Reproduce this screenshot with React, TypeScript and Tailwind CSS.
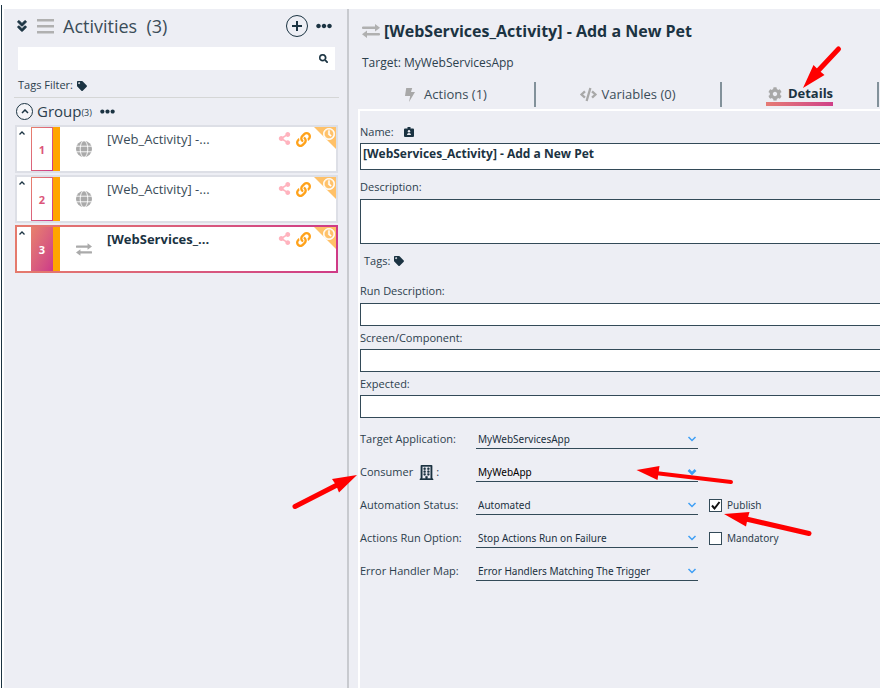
import React from "react";
import {
  FaAngleDoubleDown,
  FaCode,
  FaCog,
  FaEllipsisH,
  FaLink,
  FaRegBuilding,
  FaRegClock,
  FaSearch,
  FaShareAlt,
  FaTag,
} from "react-icons/fa";

function ExchangeIcon({ className }: { className?: string }) {
  return (
    <svg viewBox="0 0 18 14" fill="currentColor" className={className} aria-hidden="true">
      <path d="M1 2.500h12V0l5 3.700-5 3.700V5H1a1.200 1.200 0 0 1 0-2.500z" />
      <path d="M17 9H5V6.600L0 10.300 5 14v-2.500h12A1.200 1.200 0 0 0 17 9z" />
    </svg>
  );
}

function GlobeIcon({ className }: { className?: string }) {
  return (
    <svg viewBox="0 0 16 16" className={className} aria-hidden="true">
      <circle cx="8" cy="8" r="8" fill="currentColor" />
      <g fill="none" stroke="#fff" strokeWidth="0.900">
        <path d="M0 5.200h16M0 10.800h16" />
        <ellipse cx="8" cy="8" rx="3.800" ry="8.300" />
      </g>
    </svg>
  );
}

function BoltIcon({ className }: { className?: string }) {
  return (
    <svg viewBox="0 0 10 14" fill="currentColor" className={className} aria-hidden="true">
      <path d="M1.200 0h6L6 4h4L4 14l1.200-6H0z" />
    </svg>
  );
}

function BadgeIcon() {
  return (
    <svg viewBox="0 0 10 10" className="size-[10px]" aria-hidden="true">
      <path fill="#1b3342" d="M1 1.500h2.500V0h3v1.500H9a1 1 0 0 1 1 1V9a1 1 0 0 1-1 1H1a1 1 0 0 1-1-1V2.500a1 1 0 0 1 1-1z" />
      <circle cx="5" cy="4.200" r="1.200" fill="#edeef4" />
      <path fill="#edeef4" d="M3 8c0-2.700 4-2.700 4 0z" />
    </svg>
  );
}

function Chevron({ bold = false }: { bold?: boolean }) {
  return (
    <svg
      viewBox="0 0 10 6"
      className="pointer-events-none absolute right-px top-[5px] h-[6px] w-[10px]"
      fill="none"
      stroke="#3f9ff5"
      strokeWidth={bold ? 2.6 : 1.5}
      aria-hidden="true"
    >
      <path d="M1.500 1l3.500 3.500L8.500 1" />
    </svg>
  );
}

type Activity = { id: number; name: string; web: boolean; selected?: boolean };

const activities: Activity[] = [
  { id: 1, name: "[Web_Activity] -...", web: true },
  { id: 2, name: "[Web_Activity] -...", web: true },
  { id: 3, name: "[WebServices_...", web: false, selected: true },
];

function ActivityCard({ activity }: { activity: Activity }) {
  const { id, name, web, selected } = activity;
  return (
    <li
      className={
        selected
          ? "h-12 bg-linear-to-r from-[#e57a6c] to-[#cf3a86] p-[2px]"
          : "h-12 bg-[#dddfe6] p-[2px]"
      }
    >
      <div className="relative flex h-full bg-white">
        <div className="w-[14px] shrink-0 pt-[4px] pl-[2px]">
          <svg viewBox="0 0 6 4" className="h-[4px] w-[6px]" fill="none" stroke="#1b3342" strokeWidth="1.300" aria-hidden="true">
            <path d="M0.500 3.500L3 1l2.500 2.500" />
          </svg>
        </div>
        <div className="w-[22px] shrink-0 bg-linear-to-br from-[#e8816b] to-[#cc3889] p-px">
          <div
            className={
              selected
                ? "flex h-full items-center justify-center pt-[2px] text-[11px] font-bold text-white"
                : "flex h-full items-center justify-center bg-white pt-[2px] text-[11px] font-bold text-[#dc5579]"
            }
          >
            {id}
          </div>
        </div>
        <div className="w-[7px] shrink-0 bg-[#ffa500]" />
        <div className="flex w-[47px] shrink-0 items-center justify-center text-[#aaaaaa]">
          {web ? <GlobeIcon className="size-4" /> : <ExchangeIcon className="h-[13px] w-4" />}
        </div>
        <span
          className={
            selected
              ? "min-w-0 flex-1 text-[13px] leading-6 font-bold text-[#1b3342]"
              : "min-w-0 flex-1 text-[13px] leading-6 text-[#3a4c58]"
          }
        >
          {name}
        </span>
        <div className="flex gap-[5px] pt-[5px] pr-[25px]">
          <FaShareAlt className="size-[13px] text-[#ffb3be]" />
          <FaLink className="size-[15px] text-[#ffa21a]" />
        </div>
        <svg viewBox="0 0 22 22" className="absolute top-0 right-0 size-[22px]" aria-hidden="true">
          <path d="M0 0h22v22z" fill="#ffc168" />
        </svg>
        <FaRegClock className="absolute top-px right-px size-[12px] stroke-white stroke-20 text-white" />
      </div>
    </li>
  );
}

function TextRow({ id, label, className }: { id: string; label: string; className: string }) {
  return (
    <div>
      <label htmlFor={id} className={className}>
        {label}
      </label>
      <input id={id} type="text" className="block h-[23px] w-full border border-r-0 border-[#334a58] bg-white px-1 text-[11px] outline-none" />
    </div>
  );
}

type SelectRowProps = {
  id: string;
  label: React.ReactNode;
  value: string;
  bold?: boolean;
  check?: { label: string; checked: boolean };
};

function SelectRow({ id, label, value, bold, check }: SelectRowProps) {
  return (
    <div className="flex h-[33px] items-center">
      <label htmlFor={id} className="flex w-[116px] shrink-0 items-center">
        {label}
      </label>
      <div className="relative w-[222px]">
        <select
          id={id}
          className={
            bold
              ? "block h-[18px] w-full appearance-none border-b border-[#334a58] bg-transparent pl-[2px] font-['Noto_Sans',sans-serif] text-[10px] text-black outline-none"
              : "block h-[18px] w-full appearance-none border-b border-[#334a58] bg-transparent pl-[2px] font-['Noto_Sans',sans-serif] text-[10px] text-[#1b303e] outline-none"
          }
        >
          <option>{value}</option>
        </select>
        <Chevron bold={bold} />
      </div>
      {check && (
        <label className="ml-[11px] flex items-center gap-[5px] font-['Noto_Sans',sans-serif] text-[10px]">
          <span className="relative size-[13px]">
            <input
              type="checkbox"
              defaultChecked={check.checked}
              className="peer block size-[13px] appearance-none border border-[#334a58] bg-white"
            />
            <svg
              viewBox="0 0 13 13"
              className="pointer-events-none absolute inset-0 hidden size-[13px] peer-checked:block"
              fill="none"
              stroke="#111"
              strokeWidth="2"
              aria-hidden="true"
            >
              <path d="M3 6.500l2.500 3L10.500 3" />
            </svg>
          </span>
          {check.label}
        </label>
      )}
    </div>
  );
}

function Annotations() {
  return (
    <svg
      width="883"
      height="689"
      className="pointer-events-none absolute top-0 left-0"
      fill="#ff0000"
      stroke="#ff0000"
      strokeLinecap="round"
      aria-hidden="true"
    >
      <g strokeWidth="5">
        <path d="M838.500 49L816 73" />
        <path d="M295 506.500L339 484" />
        <path d="M731 482L655 473" strokeWidth="4" />
        <path d="M809 533.500L744 518.500" />
      </g>
      <g stroke="none">
        <path d="M803 88l10.500-23 5 5 6 5z" />
        <path d="M357 475l-25 4 4 6 3 7.500z" />
        <path d="M636.500 470l23-4-1 7-1 7z" />
        <path d="M724 514l25.500-2-2 7-1.500 7.500z" />
      </g>
    </svg>
  );
}

export default function App() {
  return (
    <div className="relative flex min-h-screen bg-white pt-[5px] pr-[3px] pb-px pl-px font-['Open_Sans',sans-serif] text-[11px] text-[#2c404d]">
      <div className="flex flex-1 border-l border-[#1b3342] pt-1 pl-[2px]">
        <aside className="w-[345px] shrink-0 border-r-2 border-[#c8cacf] bg-[#edeef4]">
          <header className="flex h-[34px] items-center pl-[11px] pr-[15px]">
            <button aria-label="Collapse all" className="text-[#1b3342]">
              <FaAngleDoubleDown className="size-[14px] stroke-current stroke-30" />
            </button>
            <svg viewBox="0 0 17 15" className="ml-[8px] h-[15px] w-[17px]" fill="#b0b0b0" aria-hidden="true">
              <path d="M0 0h17v2.500H0zM0 6h17v2.500H0zM0 12h17v2.500H0z" />
            </svg>
            <h2 className="ml-[9px] flex-1 text-[18px] text-[#3a4c58]">Activities&nbsp; (3)</h2>
            <button
              aria-label="Add activity"
              className="flex size-[22px] items-center justify-center rounded-full border border-[#1b3342] text-[#1b3342]"
            >
              <svg viewBox="0 0 10 10" className="size-[10px]" fill="currentColor" aria-hidden="true">
                <path d="M4 0h2v4h4v2H6v4H4V6H0V4h4z" />
              </svg>
            </button>
            <button aria-label="More" className="ml-2 text-[#1b3342]">
              <FaEllipsisH className="size-4" />
            </button>
          </header>
          <div className="mt-1 ml-[14px] mr-[12px] flex h-[23px] items-center bg-white pr-[7px]">
            <input aria-label="Search activities" className="min-w-0 flex-1 bg-transparent px-1 outline-none" />
            <button aria-label="Search">
              <FaSearch className="size-[9px] stroke-current stroke-20 text-[#1b3342]" />
            </button>
          </div>
          <div className="mr-2 ml-[10px] flex h-[28px] items-center gap-1 border-b border-[#d5d6d6] pt-1 pl-1">
            Tags Filter: <FaTag className="size-[10px] text-[#1b3342]" />
          </div>
          <div className="flex h-[27px] items-center pl-3">
            <button aria-label="Collapse group" className="flex size-[17px] items-center justify-center rounded-full border border-[#1b3342] bg-[#f5f5f8]">
              <svg viewBox="0 0 8 5" className="h-[5px] w-[8px]" fill="none" stroke="#1b3342" strokeWidth="1.500" aria-hidden="true">
                <path d="M1 4l3-3 3 3" />
              </svg>
            </button>
            <span className="ml-1 text-[15px] text-[#2c404d]">Group</span>
            <span className="pt-[2px] text-[9px]">(3)</span>
            <button aria-label="Group options" className="ml-2 text-[#1b3342]">
              <FaEllipsisH className="size-[15px]" />
            </button>
          </div>
          <ul className="mr-[9px] ml-[11px] flex flex-col gap-[2px]">
            {activities.map((activity) => (
              <ActivityCard key={activity.id} activity={activity} />
            ))}
          </ul>
        </aside>

        <main className="flex min-w-0 flex-1 flex-col bg-[#edeef4] pl-[9px]">
          <h1 className="flex h-[44px] items-center gap-1 pl-1 text-[16px] font-bold text-[#1b3342]">
            <ExchangeIcon className="h-[14px] w-[18px] text-[#b0b0b0]" />
            [WebServices_Activity] - Add a New Pet
          </h1>
          <p className="h-[29px] pl-1 text-[12px] leading-[19px]">Target: MyWebServicesApp</p>
          <nav className="flex h-[27px] text-[13px] text-[#3a4c58]">
            <button className="flex h-[25px] w-[178px] items-center justify-center gap-[9px] border-r-2 border-[#82919a]">
              <BoltIcon className="h-[14px] w-[10px] text-[#a8a8a8]" />
              Actions (1)
            </button>
            <button className="flex h-[25px] w-[186px] items-center justify-center gap-1 border-r-2 border-[#82919a]">
              <FaCode className="size-[17px] text-[#a8a8a8]" />
              Variables (0)
            </button>
            <button className="flex h-[25px] w-[157px] items-start justify-center border-r-2 border-[#82919a]">
              <span className="flex h-[24px] flex-col">
                <span className="flex h-5 items-center gap-[6px] pt-1 pl-[2px] font-bold text-[#1b3342]">
                  <FaCog className="size-[14px] text-[#a8a8a8]" />
                  Details
                </span>
                <span className="h-1 bg-linear-to-r from-[#e57a74] to-[#cf3f88]" />
              </span>
            </button>
          </nav>
          <form className="flex-1 border-t-2 border-l-2 border-white pt-[10px]">
            <label htmlFor="name" className="flex h-[22px] items-center gap-[10px]">
              Name: <BadgeIcon />
            </label>
            <input
              id="name"
              type="text"
              defaultValue="[WebServices_Activity] - Add a New Pet"
              className="block h-[27px] w-full border border-r-0 border-[#334a58] bg-white px-[2px] pb-[6px] text-[12px] font-bold text-[#1b3342] outline-none"
            />
            <label htmlFor="description" className="mt-1 flex h-[25px] items-center pt-[2px]">
              Description:
            </label>
            <textarea
              id="description"
              className="block h-[45px] w-full resize-none border border-r-0 border-[#334a58] bg-white px-1 outline-none"
            />
            <div className="flex h-[34px] items-center gap-1 pl-1">
              Tags: <FaTag className="size-[10px] text-[#1b3342]" />
            </div>
            <TextRow id="run" label="Run Description:" className="flex h-[25px] items-center pt-[2px]" />
            <TextRow id="screen" label="Screen/Component:" className="flex h-[23px] items-center pt-[2px]" />
            <TextRow id="expected" label="Expected:" className="flex h-[23px] items-center pt-[2px]" />
            <div className="mt-[5px]">
              <SelectRow id="target" label="Target Application:" value="MyWebServicesApp" />
              <SelectRow
                id="consumer"
                label={
                  <>
                    Consumer <FaRegBuilding className="mr-[2px] ml-[6px] size-[15px] stroke-current stroke-15 text-[#1b3342]" /> :
                  </>
                }
                value="MyWebApp"
                bold
              />
              <SelectRow id="status" label="Automation Status:" value="Automated" check={{ label: "Publish", checked: true }} />
              <SelectRow
                id="option"
                label="Actions Run Option:"
                value="Stop Actions Run on Failure"
                check={{ label: "Mandatory", checked: false }}
              />
              <SelectRow id="error" label="Error Handler Map:" value="Error Handlers Matching The Trigger" />
            </div>
          </form>
        </main>
      </div>
      <Annotations />
    </div>
  );
}
